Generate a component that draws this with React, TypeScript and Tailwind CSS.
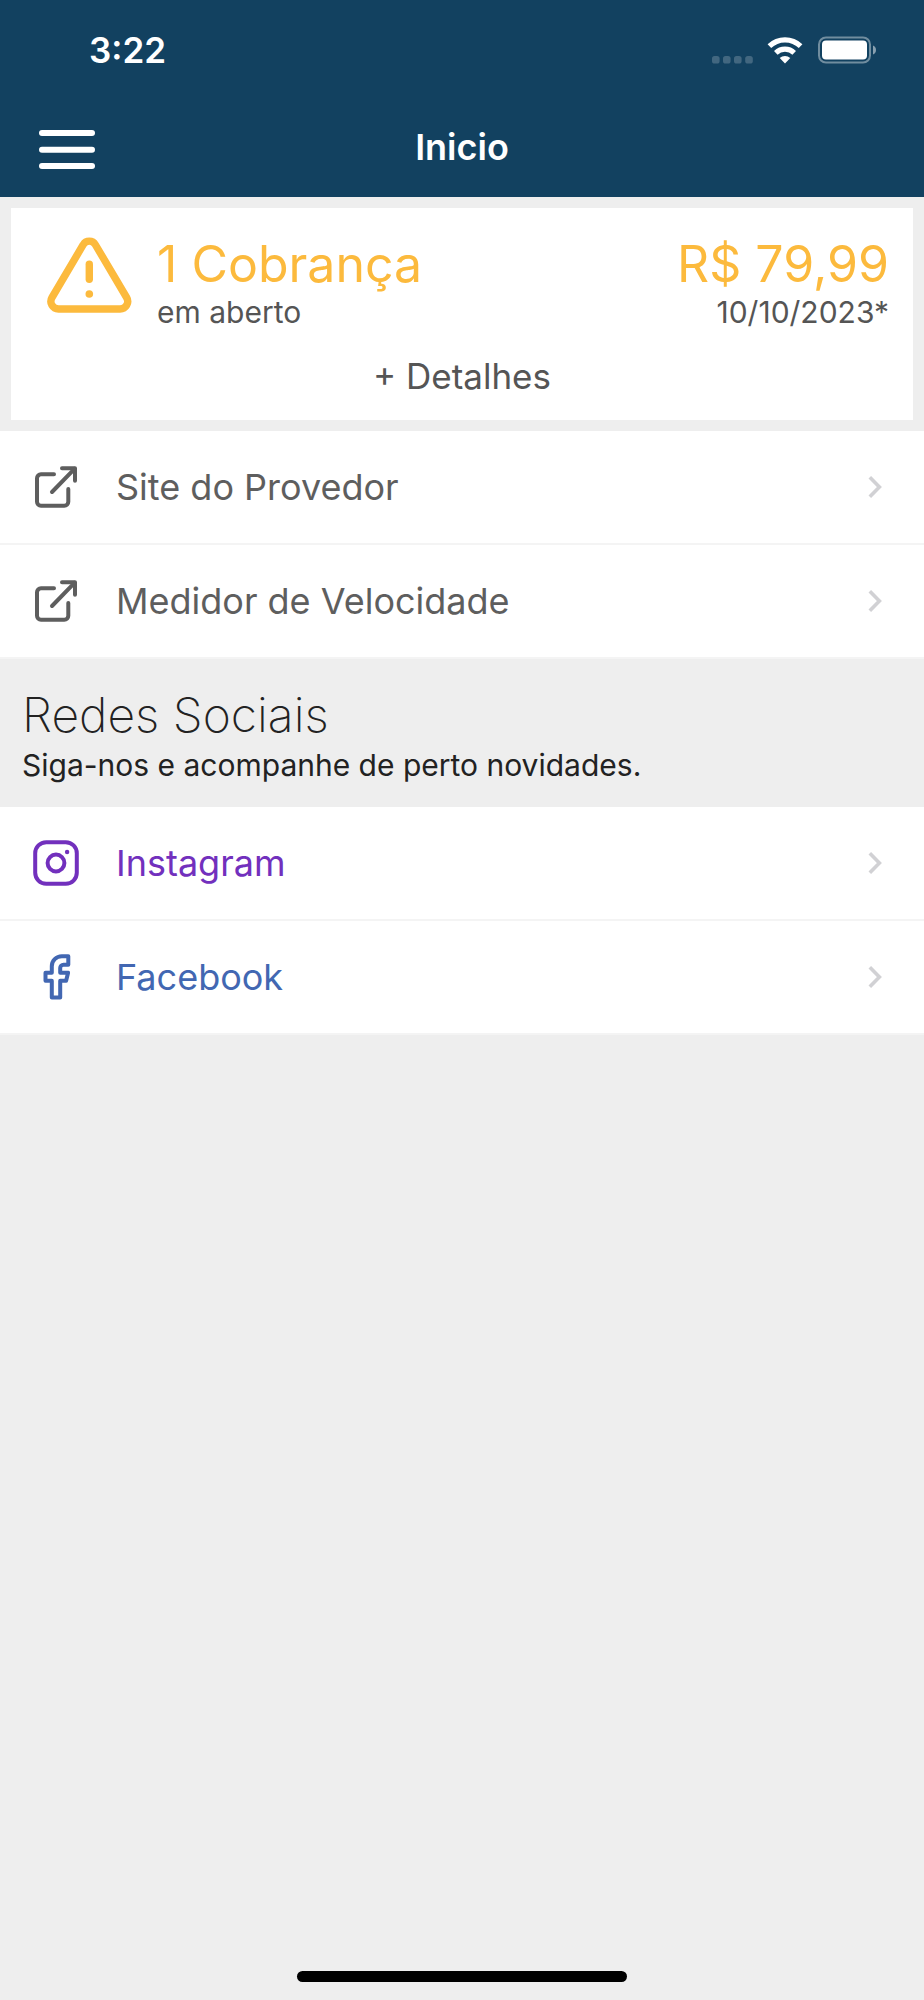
import type { ReactNode } from "react";

type LinkItem = {
  label: string;
  href: string;
  color: string;
  icon: ReactNode;
};

function ExternalIcon() {
  return (
    <svg
      viewBox="0 0 48 48"
      className="h-12 w-12"
      fill="none"
      stroke="currentColor"
      strokeWidth="4"
      strokeLinecap="round"
      strokeLinejoin="round"
      aria-hidden="true"
    >
      <path d="M22 11.3H9a4 4 0 0 0-4 4v23.4a4 4 0 0 0 4 4h23.3a4 4 0 0 0 4-4V26" />
      <path d="M30 5.3h13v12.4" />
      <path d="M20 29 42.5 5.8" />
    </svg>
  );
}

function InstagramIcon() {
  return (
    <svg
      viewBox="0 0 48 48"
      className="h-12 w-12"
      fill="none"
      stroke="currentColor"
      strokeWidth="4"
      aria-hidden="true"
    >
      <rect x="3.2" y="3.2" width="41.6" height="41.6" rx="11" />
      <circle cx="24" cy="24" r="8.4" />
      <circle cx="35.1" cy="13" r="2.2" fill="currentColor" stroke="none" />
    </svg>
  );
}

function FacebookIcon() {
  return (
    <svg
      viewBox="0 0 48 48"
      className="h-12 w-12"
      fill="none"
      stroke="currentColor"
      strokeWidth="4"
      strokeLinejoin="round"
      aria-hidden="true"
    >
      <path d="M36.3 3.2h-6.5a10 10 0 0 0-10 10v6.5h-6.3v8h6.3v16.8h8.4V27.7h5.9l2-8h-7.9v-4.6a3.3 3.3 0 0 1 3.3-3.3h4.8z" />
    </svg>
  );
}

function WarningIcon() {
  return (
    <svg
      viewBox="0 0 88 76"
      className="h-[76px] w-[88px] shrink-0"
      fill="none"
      stroke="currentColor"
      strokeWidth="7.4"
      strokeLinecap="round"
      strokeLinejoin="round"
      aria-hidden="true"
    >
      <path d="M38.2 7.7a7 7 0 0 1 12.2 0L81.6 60.5a7.6 7.6 0 0 1-6.6 11.5H13.6A7.6 7.6 0 0 1 7 60.5z" />
      <path d="M44.3 27.3v15" />
      <circle cx="44.3" cy="57" r="3.8" fill="currentColor" stroke="none" />
    </svg>
  );
}

function ChevronIcon() {
  return (
    <svg
      viewBox="0 0 14 24"
      className="ml-auto h-6 w-[14px] shrink-0 text-[#d1d1d4]"
      fill="none"
      stroke="currentColor"
      strokeWidth="3.6"
      aria-hidden="true"
    >
      <path d="M1.8 2.2 11.4 12 1.8 21.8" />
    </svg>
  );
}

function StatusBar() {
  return (
    <div className="flex h-[100px] items-center justify-between pl-[89px] pr-12 text-white">
      <span className="text-[35px] leading-10 font-semibold">3:22</span>
      <svg
        viewBox="0 0 166 28"
        className="h-7 w-[166px]"
        fill="currentColor"
        aria-hidden="true"
      >
        <g opacity="0.2">
          <rect x="2" y="20" width="7.6" height="7.6" rx="2.6" />
          <rect x="13" y="20" width="7.6" height="7.6" rx="2.6" />
          <rect x="24" y="20" width="7.6" height="7.6" rx="2.6" />
          <rect x="35.2" y="20" width="7.6" height="7.6" rx="2.6" />
        </g>
        <g fill="none" stroke="currentColor" strokeWidth="5.2">
          <path d="M59.4 10.2a22.5 22.5 0 0 1 31.2 0" />
          <path d="M65.8 16.8a13.4 13.4 0 0 1 18.4 0" />
        </g>
        <path d="M75 27.6 69.7 22a8 8 0 0 1 10.6 0z" />
        <rect
          x="109"
          y="1.5"
          width="51"
          height="25"
          rx="7"
          fill="none"
          stroke="currentColor"
          strokeWidth="2"
          opacity="0.4"
        />
        <rect x="112" y="4.6" width="45" height="19" rx="4" />
        <path d="M163 9.5c4 1.5 4 7.5 0 9z" opacity="0.5" />
      </svg>
    </div>
  );
}

function LinkList({ items }: { items: LinkItem[] }) {
  return (
    <ul>
      {items.map((item) => (
        <li key={item.label} className="border-b-2 border-[#f4f4f4] bg-white">
          <a
            href={item.href}
            className={`flex h-28 items-center pr-[42px] pl-8 text-[36px] leading-12 ${item.color}`}
          >
            {item.icon}
            <span className="pl-9">{item.label}</span>
            <ChevronIcon />
          </a>
        </li>
      ))}
    </ul>
  );
}

const providerLinks: LinkItem[] = [
  {
    label: "Site do Provedor",
    href: "#site",
    color: "text-[#5e5e5e]",
    icon: <ExternalIcon />,
  },
  {
    label: "Medidor de Velocidade",
    href: "#velocidade",
    color: "text-[#5e5e5e]",
    icon: <ExternalIcon />,
  },
];

const socialLinks: LinkItem[] = [
  {
    label: "Instagram",
    href: "#instagram",
    color: "text-[#7230bd]",
    icon: <InstagramIcon />,
  },
  {
    label: "Facebook",
    href: "#facebook",
    color: "text-[#4267b2]",
    icon: <FacebookIcon />,
  },
];

export default function App() {
  return (
    <div className="flex min-h-screen flex-col bg-[#eeeeee] font-['Inter',sans-serif]">
      <header className="bg-[#124160]">
        <StatusBar />
        <div className="grid h-[97px] grid-cols-[1fr_auto_1fr] items-center px-[39px] text-white">
          <button type="button" aria-label="Menu" className="w-14">
            <svg viewBox="0 0 56 40" className="h-10 w-14" fill="currentColor" aria-hidden="true">
              <rect y="1" width="56" height="6" rx="3" />
              <rect y="17.7" width="56" height="6" rx="3" />
              <rect y="34" width="56" height="6" rx="3" />
            </svg>
          </button>
          <h1 className="pb-1 text-[36px] leading-12 font-semibold">Inicio</h1>
        </div>
      </header>

      <main>
        <section className="m-[11px] bg-white pt-7 pb-5">
          <div className="flex pr-6 pl-[34px]">
            <div className="pt-px text-[#fcba3d]">
              <WarningIcon />
            </div>
            <div className="pl-6">
              <p className="text-[50px] leading-14 text-[#fcba3d]">1 Cobrança</p>
              <p className="text-[30px] leading-10 text-[#555555]">em aberto</p>
            </div>
            <div className="ml-auto text-right">
              <p className="text-[50px] leading-14 text-[#fcba3d]">R$ 79,99</p>
              <p className="text-[30px] leading-10 text-[#555555]">10/10/2023*</p>
            </div>
          </div>
          <button
            type="button"
            className="mx-auto mt-5 block text-[35px] leading-12 text-[#555555]"
          >
            + Detalhes
          </button>
        </section>

        <LinkList items={providerLinks} />

        <section className="px-[22px] pt-7 pb-5 text-[#222222]">
          <h2 className="text-[48px] leading-14 font-extralight">Redes Sociais</h2>
          <p className="text-[30px] leading-11">
            Siga-nos e acompanhe de perto novidades.
          </p>
        </section>

        <LinkList items={socialLinks} />
      </main>

      <footer className="mt-auto flex justify-center pb-[18px]">
        <div className="h-[11px] w-[330px] rounded-full bg-black" />
      </footer>
    </div>
  );
}
